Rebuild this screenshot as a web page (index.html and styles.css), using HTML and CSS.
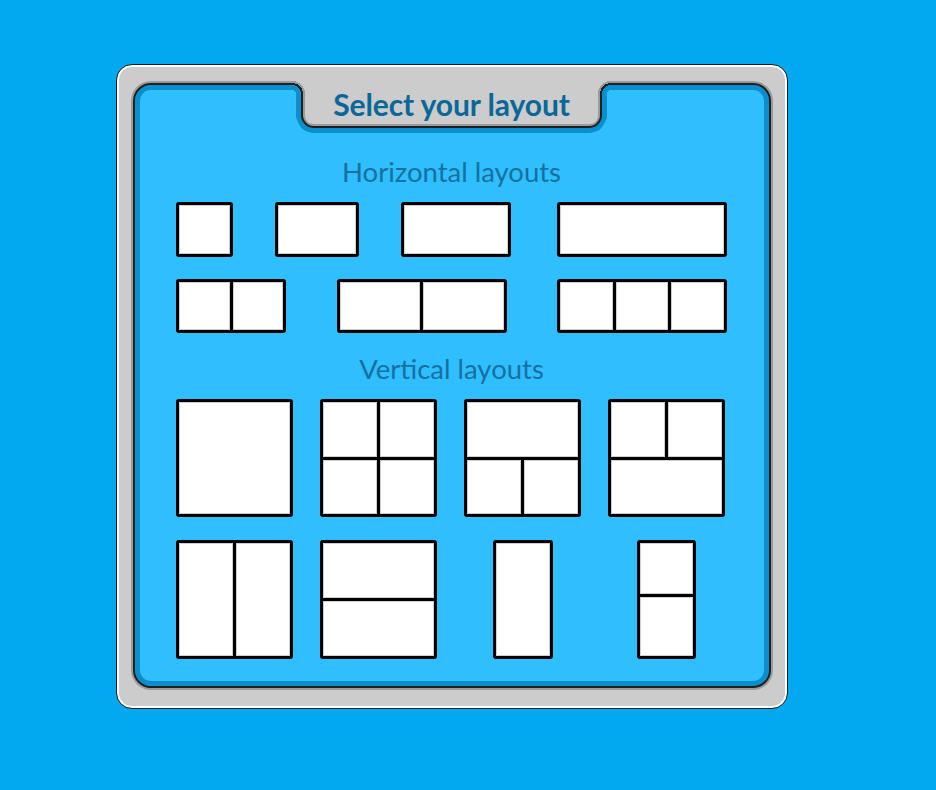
FILE: index.html
```html
<!DOCTYPE html>
<html>
<head>
<meta charset="utf-8">
<title>Select your layout</title>
<link rel="stylesheet" href="styles.css">
</head>
<body>
<div class="frame">
  <div class="panel">
    <div class="tab"><h1 class="title">Select your layout</h1></div>

    <h2 class="section-title">Horizontal layouts</h2>
    <div class="hrow hrow-1">
      <div class="lay w57 h55"><div class="cell"></div></div>
      <div class="lay w84 h55"><div class="cell"></div></div>
      <div class="lay w110 h55"><div class="cell"></div></div>
      <div class="lay w170 h55 push"><div class="cell"></div></div>
    </div>
    <div class="hrow hrow-2">
      <div class="lay w110 h54 cols2"><div class="cell"></div><div class="cell"></div></div>
      <div class="lay w170 h54 cols2"><div class="cell"></div><div class="cell"></div></div>
      <div class="lay w170 h54 cols3"><div class="cell"></div><div class="cell"></div><div class="cell"></div></div>
    </div>

    <h2 class="section-title">Vertical layouts</h2>
    <div class="vrow vrow-1">
      <div class="lay w117 h118"><div class="cell"></div></div>
      <div class="lay w117 h118 grid4"><div class="cell"></div><div class="cell"></div><div class="cell"></div><div class="cell"></div></div>
      <div class="lay w117 h118 top1-bot2"><div class="cell span2"></div><div class="cell"></div><div class="cell"></div></div>
      <div class="lay w117 h118 top2-bot1"><div class="cell"></div><div class="cell"></div><div class="cell span2"></div></div>
    </div>
    <div class="vrow vrow-2">
      <div class="lay w117 h119 cols2"><div class="cell"></div><div class="cell"></div></div>
      <div class="lay w117 h119 rows2"><div class="cell"></div><div class="cell"></div></div>
      <div class="lay w60 h119"><div class="cell"></div></div>
      <div class="lay w59 h119 rows2-uneven"><div class="cell"></div><div class="cell"></div></div>
    </div>
  </div>
</div>
</body>
</html>
```

FILE: styles.css
```css
* { box-sizing: border-box; }

html, body {
  margin: 0;
  padding: 0;
}

body {
  background: #03a9f0;
  font-family: Lato, "Open Sans", "Liberation Sans", sans-serif;
  padding: 64px 0 0 116px;
  min-height: 790px;
}

.frame {
  width: 672px;
  height: 645px;
  background: #cccccc;
  border: 1px solid #1c1c1c;
  border-radius: 16px;
  box-shadow: inset 0 0 0 2px #ffffff;
  padding: 18px 16px 20px 16px;
}

.panel {
  height: 100%;
  background: #2fbfff;
  border: 2px solid #1f1f1f;
  border-radius: 18px;
  box-shadow: 0 0 0 2px #9b9b9b, inset 0 0 0 5px #0b8fcc;
  padding: 0 42px 0 41px;
  display: flex;
  flex-direction: column;
  align-items: stretch;
}

.tab {
  position: relative;
  align-self: center;
  width: 301px;
  height: 47px;
  margin-top: -4px;
  background: #cccccc;
  border: 2px solid #1f1f1f;
  border-top: 0;
  border-radius: 0 0 13px 13px;
  box-shadow:
    inset 2px 0 0 #9b9b9b,
    inset -2px 0 0 #9b9b9b,
    inset 0 -2px 0 #9b9b9b,
    -5px 0 0 #0b8fcc,
    5px 0 0 #0b8fcc,
    0 5px 0 #0b8fcc,
    -3px 4px 0 #0b8fcc,
    3px 4px 0 #0b8fcc;
  display: flex;
  align-items: center;
  justify-content: center;
}

.tab::before,
.tab::after {
  content: "";
  position: absolute;
  top: 0;
  width: 13px;
  height: 13px;
}

.tab::before {
  left: -11px;
  background: radial-gradient(circle at 0 100%,
    #2fbfff 0, #2fbfff 4px,
    #0b8fcc 4px, #0b8fcc 9px,
    #1f1f1f 9px, #1f1f1f 11px,
    #9b9b9b 11px, #9b9b9b 13px,
    #cccccc 13px);
}

.tab::after {
  right: -11px;
  background: radial-gradient(circle at 100% 100%,
    #2fbfff 0, #2fbfff 4px,
    #0b8fcc 4px, #0b8fcc 9px,
    #1f1f1f 9px, #1f1f1f 11px,
    #9b9b9b 11px, #9b9b9b 13px,
    #cccccc 13px);
}

.title {
  margin: 0;
  padding-top: 1px;
  font-size: 30px;
  font-weight: 700;
  color: #0a6898;
  letter-spacing: -0.1px;
  line-height: 32px;
}

.section-title {
  margin: 0;
  text-align: center;
  font-size: 27.5px;
  font-weight: 400;
  line-height: 30px;
  color: #1670a3;
}

.panel > .section-title:nth-of-type(1) { margin-top: 29px; }
.hrow-1 { margin-top: 15px; }
.hrow-2 { margin-top: 22px; }
.panel > .section-title:nth-of-type(2) { margin-top: 21px; }
.vrow-1 { margin-top: 15px; }
.vrow-2 { margin-top: 23px; }

.hrow {
  display: flex;
  align-items: flex-start;
}

.hrow-1 { gap: 42px; }
.hrow-1 .push { margin-left: auto; }
.hrow-2 { justify-content: space-between; }

.vrow {
  display: grid;
  grid-template-columns: repeat(4, 117px);
  column-gap: 27px;
  justify-items: center;
  align-items: start;
}

.lay {
  display: grid;
  gap: 3px;
  background: #000000;
  border: 3px solid #000000;
  border-radius: 3px;
  overflow: hidden;
}

.cell {
  background: #ffffff;
  box-shadow: inset 0 0 0 1px #cfcfcf;
}

.cols2 { grid-template-columns: 1fr 1fr; }
.cols3 { grid-template-columns: 1fr 1fr 1fr; }
.rows2 { grid-template-rows: 1fr 1fr; }
.rows2-uneven { grid-template-rows: 51fr 59fr; }
.grid4, .top1-bot2, .top2-bot1 {
  grid-template-columns: 1fr 1fr;
  grid-template-rows: 1fr 1fr;
}
.span2 { grid-column: span 2; }

.w57 { width: 57px; }
.w59 { width: 59px; }
.w60 { width: 60px; }
.w84 { width: 84px; }
.w110 { width: 110px; }
.w117 { width: 117px; }
.w170 { width: 170px; }
.h54 { height: 54px; }
.h55 { height: 55px; }
.h118 { height: 118px; }
.h119 { height: 119px; }
```
